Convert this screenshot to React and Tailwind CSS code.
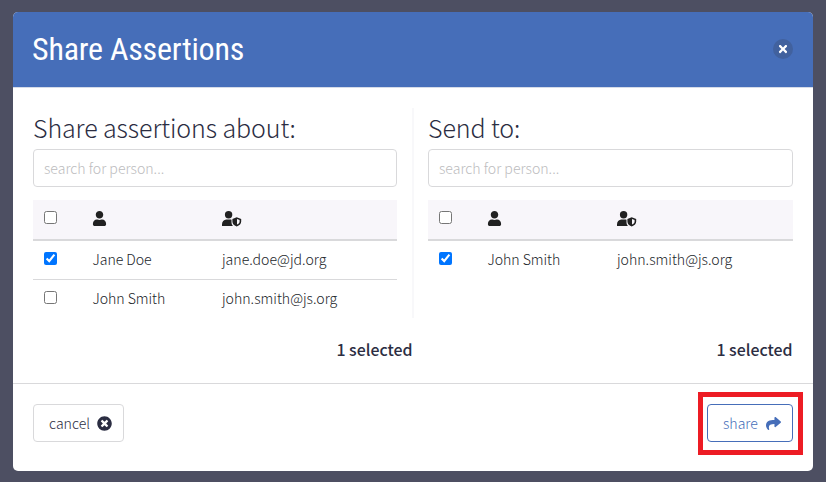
import { FaUser, FaTimesCircle, FaShare, FaTimes } from 'react-icons/fa'

function UserShield() {
  return (
    <svg width="20" height="16" viewBox="0 0 20 16" fill="currentColor">
      <circle cx="6.6" cy="3.8" r="3.7" />
      <path d="M0 15v-1.600C0 10.600 1.800 8.700 4.300 8.600h4.500l.7.200v2.300c0 1.600.5 2.900 1.400 3.900z" />
      <path fillRule="evenodd" d="M14.700 6.300 19.200 8v2.500c0 2.300-1.600 4-4.500 4.900-2.900-.9-4.300-2.600-4.300-4.900V8zM15 8.100v5.400c1.700-.7 2.600-1.600 2.600-3V9.100z" />
    </svg>
  )
}

function PersonTable({ title, rows, width }) {
  return (
    <section className={width}>
      <h2 className="h-[41px] text-[25px] leading-[38px] font-light tracking-[-0.09px] whitespace-nowrap text-[#2b2d42]">{title}</h2>
      <input
        type="text"
        placeholder="search for person..."
        className="block h-[38px] w-full rounded-[4px] border border-[#d9d9db] px-[10px] text-[14.1px] font-light text-[#212529] placeholder:text-[#bcbcbe]"
      />
      <div className="mt-[13px] flex h-[41px] items-start border-b-2 border-[#d9d9db] bg-[#f8f6fa] pl-[11px] text-[#212121]">
        <input type="checkbox" className="mt-[11px] size-[13px] shrink-0" />
        <div className="ml-[36px] w-[129px] shrink-0 pt-[11px]"><FaUser size={15} className="-ml-[1px]" /></div>
        <div className="pt-[11px]"><UserShield /></div>
      </div>
      {rows.map((row, i) => (
        <div key={i} className={`flex h-[39px] items-start pl-[11px] text-[14.1px] leading-[36px] font-light whitespace-nowrap text-[#212529] ${i < rows.length - 1 ? 'border-b border-[#d9d9db]' : ''}`}>
          <input type="checkbox" defaultChecked={row.checked} className="mt-[11px] size-[13px] shrink-0" />
          <span className="ml-[35.5px] w-[129.5px] shrink-0 tracking-[-0.05px]">{row.name}</span>
          <span>{row.email}</span>
        </div>
      ))}
    </section>
  )
}

export default function App() {
  return (
    <div className="h-[482px] w-[826px] bg-[#4d4f62] pt-[12px] pl-[13px] font-['Source_Sans_Pro','Noto_Sans_CJK_SC',sans-serif]">
      <div className="flex h-[459px] w-[800px] flex-col overflow-hidden rounded-[5px] bg-white">
        <header className="flex h-[76px] shrink-0 items-center justify-between border-b border-[#d5dbe8] bg-[#466eb9] px-[20px]">
          <h1 className="-ml-[1px] pb-[2px] font-['Roboto_Condensed',Roboto,sans-serif] text-[32px] leading-[40px] [font-stretch:75%] tracking-[-0.2px] text-white">Share Assertions</h1>
          <button className="mb-[1px] flex size-[20px] items-center justify-center rounded-full bg-[#41619e] text-white">
            <FaTimes size={12} />
          </button>
        </header>
        <main className="flex h-[230px] shrink-0 pt-[20px] pl-[20px]">
          <PersonTable
            width="w-[364px]"
            title="Share assertions about:"
            rows={[
              { name: 'Jane Doe', email: 'jane.doe@jd.org', checked: true },
              { name: 'John Smith', email: 'john.smith@js.org', checked: false },
            ]}
          />
          <div className="ml-[15px] h-[210px] w-[2px] bg-[#f8f8fa]" />
          <div className="w-[14px]" />
          <PersonTable
            width="w-[365px]"
            title="Send to:"
            rows={[{ name: 'John Smith', email: 'john.smith@js.org', checked: true }]}
          />
        </main>
        <div className="flex h-[65px] shrink-0 pt-[20px] text-[15.9px] leading-[24px] font-medium text-[#2b2d42]">
          <div className="w-[399.5px] text-right">1 selected</div>
          <div className="w-[380px] text-right">1 selected</div>
        </div>
        <footer className="flex flex-1 items-start justify-between border-t border-[#d9d9db] px-[20px] pt-[20px] text-[14.1px] font-light">
          <button className="flex h-[38px] w-[91px] items-center justify-between rounded-[4px] border border-[#d9d9db] pr-[11px] pl-[15px] text-[#2b2d42]">
            <span className="pt-[2px]">cancel</span> <FaTimesCircle size={15} />
          </button>
          <div className="-mt-[12px] -mr-[10px] flex h-[63px] w-[105px] items-start border-[5px] border-[#ed1c24] pt-[7px] pl-[4px]">
            <button className="flex h-[38px] w-[86px] items-center justify-between rounded-[4px] border border-[#466eb9] pr-[11px] pl-[15px] text-[#466eb9]">
              <span className="pt-[2px]">share</span> <FaShare size={15} />
            </button>
          </div>
        </footer>
      </div>
    </div>
  )
}
